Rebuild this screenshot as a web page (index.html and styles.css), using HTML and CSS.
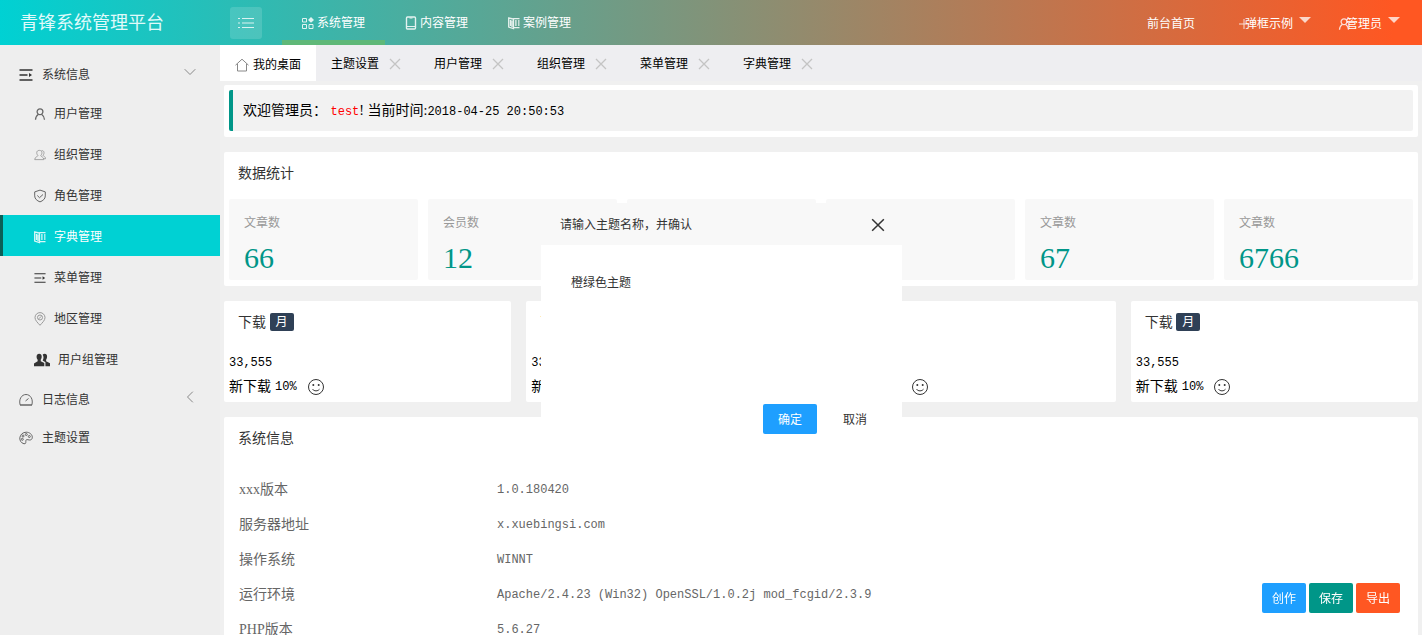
FILE: index.html
```html
<!DOCTYPE html>
<html lang="zh-CN">
<head>
<meta charset="utf-8">
<title>青锋系统管理平台</title>
<link rel="stylesheet" href="styles.css">
</head>
<body>
<svg class="sprite" aria-hidden="true">
  <symbol id="i-list" viewBox="0 0 16 12"><path d="M4 1.500h12M4 6h12M4 10.500h12M0 1.500h2M0 6h2M0 10.500h2"/></symbol>
  <symbol id="i-grid" viewBox="0 0 12 12"><path d="M.5 1.500h4v3.500h-4zM.5 7.500h4v4h-4zM7 7.500h4v4H7z"/><path class="solid" d="M9 0l3 2.900-3 2.900-3-2.900z"/></symbol>
  <symbol id="i-phone" viewBox="0 0 12 14"><rect x="1.500" y="1" width="9" height="12" rx="1" stroke-width="1.400"/><path d="M1.500 10.500h9M4.500 2h3"/></symbol>
  <symbol id="i-book" viewBox="0 0 12 12"><path stroke-width="1.300" d="M.7 1l4.800 1v9.500L.7 10zM5.500 1.700h6M5.500 10.700h6M2.500 3v6M4 3.500v6.500M7 4h1.700M7 6h1.700M7 8h1.700M10 4h1.500M10 6h1.500M10 8h1.500"/></symbol>
  <symbol id="i-user" viewBox="0 0 12 12"><g stroke-width="1.300"><circle cx="6" cy="3.800" r="2.900"/><path d="M1.500 11.800c.2-2.600 1-4.200 3-5.500M7.500 6.300c2 1.300 2.800 2.900 3 5.500"/></g></symbol>
  <symbol id="i-group" viewBox="0 0 13.500 12"><path d="M6 .8c4 0 3.200 4.500 1.600 5.700 0 1.500 3.400 1.500 3.400 4.700H.8c0-3.200 3.600-3.200 3.600-4.700C2.800 5.300 2 .8 6 .8zM8.500 1c3.600-.2 3.200 4 1.600 5.300.3 1 3 1.500 3 3.900H11"/></symbol>
  <symbol id="i-shield" viewBox="0 0 12 13"><path d="M6 .6l5.300 1.800v4c0 3-2.300 4.800-5.300 6-3-1.200-5.300-3-5.300-6v-4zM3.300 6l2.200 2.200L9 5"/></symbol>
  <symbol id="i-menu" viewBox="0 0 14 12"><path stroke-width="1.300" d="M.5 1h13M.5 6h8M.5 11h13"/><path class="solid" d="M10 4l3 2-3 2z"/></symbol>
  <symbol id="i-pin" viewBox="0 0 12 14"><path d="M6 13.300C3.500 10.500 1 8.300 1 5.600a5 5 0 0 1 10 0c0 2.700-2.500 4.900-5 7.700z"/><circle cx="6" cy="5.500" r="2.500"/><path d="M4.800 6.800l2.400-2.400"/></symbol>
  <symbol id="i-people" viewBox="0 0 14 11"><path class="solid" d="M4.500 0c3 0 2.500 4 1.400 5.300v1.200L9 8.200V11H0V8.600l3.200-2V5.300C2 4 1.600 0 4.500 0zM9.400 0c2.800 0 2.300 4 1.200 5.300v1.200L14 8.400V11h-4V7.500L7.600 6C8.600 4 8.500 2 7.600.8 8 .3 8.600 0 9.400 0z"/></symbol>
  <symbol id="i-gauge" viewBox="0 0 14 13"><path d="M1.200 11.500C-.5 6 2.500 1 7 1s7.500 5 5.800 10.500M6.500 7.500L9.500 5"/><path stroke-width="1.500" d="M1 11.500h12"/></symbol>
  <symbol id="i-palette" viewBox="0 0 14 13"><path d="M5 12.300C2 11.500.6 9 .8 6.300 1.200 3 4 .7 7.200.7c3.400 0 6.100 2.300 6.100 5 0 2.200-1.500 3-3 2.800-2-.3-2.800-.8-3.300.2-.5 1.200.6 3.900-2 3.600z"/><circle cx="4" cy="4.500" r="1"/><circle cx="7.300" cy="3" r="1"/><circle cx="10.300" cy="5" r="1"/><circle cx="3.300" cy="7.800" r="1"/></symbol>
  <symbol id="i-home" viewBox="0 0 14 13"><path d="M.5 6.700L7 .7l6.500 6M2.500 5.500v7h9v-7"/></symbol>
  <symbol id="i-close" viewBox="0 0 12 12"><path stroke-width="1.300" d="M1 1l10 10M11 1L1 11"/></symbol>
  <symbol id="i-down" viewBox="0 0 12 7"><path d="M.7.700L6 6 11.300.700"/></symbol>
  <symbol id="i-left" viewBox="0 0 7 14"><path d="M6.300 1.700L1 7l5.300 5.300"/></symbol>
  <symbol id="i-caret" viewBox="0 0 12 6"><path class="solid" d="M0 0h12L6 6z"/></symbol>
  <symbol id="i-plus" viewBox="0 0 10 10"><path d="M0 5h10M5 0v10"/></symbol>
  <symbol id="i-smile" viewBox="0 0 18 18"><circle cx="9" cy="9" r="7.500"/><path d="M5.500 11.200c1.800 2.200 5.200 2.200 7 0"/><circle class="solid" cx="6.300" cy="7" r="1"/><circle class="solid" cx="11.700" cy="7" r="1"/></symbol>
</svg>

<header class="topbar">
  <h1 class="logo">青锋系统管理平台</h1>
  <button class="toggle" type="button" aria-label="菜单"><svg class="ic ic-16"><use href="#i-list"/></svg></button>
  <nav class="topnav">
    <a class="topnav-item is-active" href="#"><svg class="ic ic-12"><use href="#i-grid"/></svg>系统管理</a>
    <a class="topnav-item" href="#"><svg class="ic ic-12"><use href="#i-phone"/></svg>内容管理</a>
    <a class="topnav-item" href="#"><svg class="ic ic-12"><use href="#i-book"/></svg>案例管理</a>
  </nav>
  <nav class="usernav">
    <a href="#">前台首页</a>
    <a href="#"><svg class="ic ic-10"><use href="#i-plus"/></svg><span class="snug">弹框示例</span><svg class="caret"><use href="#i-caret"/></svg></a>
    <a href="#"><svg class="ic ic-12"><use href="#i-user"/></svg><span class="snug">管理员</span><svg class="caret"><use href="#i-caret"/></svg></a>
  </nav>
</header>

<div class="shell">
  <aside class="side">
    <a class="side-item" href="#"><svg class="ic ic-14 dark"><use href="#i-menu"/></svg>系统信息<svg class="ic ic-12 arrow"><use href="#i-down"/></svg></a>
    <a class="side-sub" href="#"><svg class="ic ic-12"><use href="#i-user"/></svg>用户管理</a>
    <a class="side-sub" href="#"><svg class="ic ic-12 pale"><use href="#i-group"/></svg>组织管理</a>
    <a class="side-sub" href="#"><svg class="ic ic-12"><use href="#i-shield"/></svg>角色管理</a>
    <a class="side-sub is-active" href="#"><svg class="ic ic-12"><use href="#i-book"/></svg>字典管理</a>
    <a class="side-sub" href="#"><svg class="ic ic-12 dark"><use href="#i-menu"/></svg>菜单管理</a>
    <a class="side-sub" href="#"><svg class="ic ic-12 pale"><use href="#i-pin"/></svg>地区管理</a>
    <a class="side-sub" href="#"><svg class="ic ic-16 dark"><use href="#i-people"/></svg>用户组管理</a>
    <a class="side-item" href="#"><svg class="ic ic-14"><use href="#i-gauge"/></svg>日志信息<svg class="ic ic-12 arrow"><use href="#i-left"/></svg></a>
    <a class="side-item" href="#"><svg class="ic ic-14"><use href="#i-palette"/></svg>主题设置</a>
  </aside>

  <div class="content">
    <div class="tabs">
      <a class="tab is-active" href="#"><svg class="ic ic-14"><use href="#i-home"/></svg>我的桌面</a>
      <div class="tab">主题设置<button type="button" aria-label="关闭"><svg class="ic ic-12"><use href="#i-close"/></svg></button></div>
      <div class="tab">用户管理<button type="button" aria-label="关闭"><svg class="ic ic-12"><use href="#i-close"/></svg></button></div>
      <div class="tab">组织管理<button type="button" aria-label="关闭"><svg class="ic ic-12"><use href="#i-close"/></svg></button></div>
      <div class="tab">菜单管理<button type="button" aria-label="关闭"><svg class="ic ic-12"><use href="#i-close"/></svg></button></div>
      <div class="tab">字典管理<button type="button" aria-label="关闭"><svg class="ic ic-12"><use href="#i-close"/></svg></button></div>
    </div>

    <main class="page">
      <section class="card"><div class="card-body"><blockquote class="quote">欢迎管理员： <span class="mono name">test</span>! 当前时间:<span class="mono">2018-04-25 20:50:53</span></blockquote></div></section>

      <section class="card">
        <h2 class="card-head">数据统计</h2>
        <div class="card-body stats">
          <a class="stat" href="#"><h3>文章数</h3><p>66</p></a>
          <a class="stat" href="#"><h3>会员数</h3><p>12</p></a>
          <div class="stat"></div>
          <div class="stat"></div>
          <a class="stat" href="#"><h3>文章数</h3><p>67</p></a>
          <a class="stat" href="#"><h3>文章数</h3><p>6766</p></a>
        </div>
      </section>

      <div class="downloads">
        <section class="card"><h2 class="card-head">下载 <span class="badge">月</span></h2><div class="card-body lines"><p class="mono">33,555</p><p>新下载 <span class="mono">10%</span><svg class="ic smile"><use href="#i-smile"/></svg></p></div></section>
        <section class="card"><h2 class="card-head">下载 <span class="badge">月</span></h2><div class="card-body lines"><p class="mono">33,555</p><p>新下载 <span class="mono">10%</span><svg class="ic smile"><use href="#i-smile"/></svg></p></div></section>
        <section class="card"><h2 class="card-head">下载 <span class="badge">月</span></h2><div class="card-body lines"><p class="mono">33,555</p><p>新下载 <span class="mono">10%</span><svg class="ic smile"><use href="#i-smile"/></svg></p></div></section>
        <section class="card"><h2 class="card-head">下载 <span class="badge">月</span></h2><div class="card-body lines"><p class="mono">33,555</p><p>新下载 <span class="mono">10%</span><svg class="ic smile"><use href="#i-smile"/></svg></p></div></section>
      </div>

      <section class="card">
        <h2 class="card-head">系统信息</h2>
        <table class="info">
          <tr><th scope="row">xxx版本</th><td class="mono">1.0.180420</td></tr>
          <tr><th scope="row">服务器地址</th><td class="mono">x.xuebingsi.com</td></tr>
          <tr><th scope="row">操作系统</th><td class="mono">WINNT</td></tr>
          <tr><th scope="row">运行环境</th><td class="mono">Apache/2.4.23 (Win32) OpenSSL/1.0.2j mod_fcgid/2.3.9</td></tr>
          <tr><th scope="row">PHP版本</th><td class="mono">5.6.27</td></tr>
        </table>
      </section>
    </main>
  </div>
</div>

<div class="actions">
  <button class="btn blue" type="button">创作</button>
  <button class="btn green" type="button">保存</button>
  <button class="btn orange" type="button">导出</button>
</div>

<div class="dialog" role="dialog" aria-labelledby="dialog-title">
  <div class="dialog-head"><h2 id="dialog-title">请输入主题名称，并确认</h2><button type="button" aria-label="关闭"><svg class="ic ic-14"><use href="#i-close"/></svg></button></div>
  <div class="dialog-body">橙绿色主题</div>
  <div class="dialog-foot"><button class="btn blue wide" type="button">确定</button><button class="btn plain wide" type="button">取消</button></div>
</div>
</body>
</html>
```
FILE: styles.css
```css
* { box-sizing: border-box; margin: 0; padding: 0; }

body {
  display: flex;
  flex-direction: column;
  height: 100vh;
  overflow: hidden;
  background: #f0f0f0;
  color: #000;
  font: 12px/20px "Liberation Serif", "Noto Sans CJK SC", sans-serif;
}

a { color: inherit; text-decoration: none; }
button { border: 0; background: none; color: inherit; font: inherit; cursor: pointer; }
h1, h2, h3, th { font-weight: 400; }

.sprite { position: absolute; width: 0; height: 0; }
svg { stroke: currentColor; fill: none; }
.solid { fill: currentColor; stroke: none; }
.ic { flex: none; display: block; height: 14px; }
.ic-10 { width: 10px; }
.ic-12 { width: 12px; }
.ic-14 { width: 14px; }
.ic-16 { width: 16px; }
.mono { font-family: "Liberation Mono", monospace; font-size: 12px; }

.topbar {
  flex: none;
  display: flex;
  align-items: center;
  height: 45px;
  background: linear-gradient(to right, #00d1d3, #ff5722 98%);
  color: #fff;
}
.logo { width: 230px; padding-left: 20px; font-size: 18px; line-height: 44px; color: #e0fafa; }
.toggle {
  display: grid;
  place-items: center;
  width: 32px;
  height: 32px;
  border-radius: 3px;
  background: rgba(255, 255, 255, .14);
}
.toggle .ic { opacity: .8; }
.topnav { display: flex; height: 100%; margin-left: 20px; }
.topnav-item { display: flex; align-items: center; gap: 3px; padding: 6px 20px 0; border-bottom: 5px solid transparent; }
.topnav-item.is-active { border-color: #5fb878; }
.topnav-item .ic { opacity: .85; }
.usernav { display: flex; gap: 44px; margin-left: auto; padding-right: 22px; }
.usernav a { display: flex; align-items: center; padding-top: 2px; }
.usernav a:last-child { margin-left: -17px; }
.usernav .ic { opacity: .8; }
.snug { margin-left: -4px; }
.caret { width: 12px; height: 6px; margin: 0 0 8px 6px; opacity: .75; }

.shell { flex: 1; display: flex; min-height: 0; }
.side { flex: none; width: 220px; padding-top: 9px; background: #eee; color: #333; }
.side .ic { color: #666; }
.side .pale { color: #999; }
.side .dark { color: #333; }
.side-item { display: flex; align-items: center; gap: 9px; height: 38px; padding: 3px 24px 0 19px; }
.side .arrow { margin-left: auto; margin-bottom: 6px; color: #888; }
.side-sub { display: flex; align-items: center; gap: 8px; height: 41px; padding: 3px 0 0 31px; border-left: 3px solid transparent; }
.side-sub.is-active { border-color: #0b5f57; background: #00d1d3; color: #fff; }
.side-sub.is-active .ic { color: #fff; opacity: .85; }

.content { flex: 1; min-width: 0; display: flex; flex-direction: column; }
.tabs { flex: none; display: flex; height: 36px; background: #eeeef1; }
.tab { display: flex; align-items: center; gap: 10px; padding: 2px 18px 0 15px; }
.tab.is-active { gap: 4px; padding: 3px 15px 0; background: #fff; }
.tab .ic { color: #888; }
.tab button .ic { height: 12px; color: #c4c4c4; }

.page { flex: 1; display: flex; flex-direction: column; gap: 15px; padding: 4px; min-height: 0; overflow: hidden; }
.card { flex: none; border-radius: 2px; background: #fff; }
.card-head { height: 42px; padding: 0 14px; font-size: 14px; line-height: 44px; color: #333; }
.card-body { padding: 5px 5px 6px; }
.quote {
  padding: 10px;
  border-left: 4px solid #009688;
  border-radius: 2px;
  background: #f2f2f2;
  font-size: 14px;
  line-height: 21px;
}
.quote .mono { line-height: 16px; }
.name { color: #f00; }

.stats { display: grid; grid-template-columns: repeat(6, 1fr); gap: 10px; }
.stat { padding: 14px 15px 4px; border-radius: 2px; background: #f8f8f8; }
.stat h3 { font-size: 12px; line-height: 20px; color: #999; }
.stat p { padding-top: 6px; font-size: 30px; line-height: 37px; color: #009688; }

.downloads { flex: none; display: grid; grid-template-columns: repeat(4, 1fr); gap: 15px; }
.badge { display: inline-block; padding: 0 6px; border-radius: 2px; background: #2f4056; color: #fff; font-size: 12px; line-height: 18px; vertical-align: 1px; }
.lines { padding: 8px 5px 3px; font-size: 14px; line-height: 24px; }
.lines p { display: flex; align-items: center; gap: 4px; }
.smile { width: 18px; height: 18px; margin-left: 6px; color: #333; }

.info { width: calc(100% - 30px); margin: 13px 15px; border-collapse: collapse; color: #666; }
.info th { width: 258px; height: 35px; text-align: left; font-size: 14px; }

.btn { height: 30px; padding: 1px 10px 0; border-radius: 2px; color: #fff; }
.blue { background: #1e9fff; }
.green { background: #009688; }
.orange { background: #ff5722; }
.plain { color: #333; }
.wide { padding: 1px 15px 0; }

.actions { position: fixed; right: 22px; bottom: 22px; display: flex; gap: 3px; }

.dialog { position: fixed; top: 203px; left: calc(50% - 170px); width: 361px; background: #fff; color: #333; }
.dialog-head { display: flex; align-items: center; justify-content: space-between; height: 42px; padding: 2px 17px 0 19px; background: #f8f8f8; }
.dialog-head h2 { font-size: 12px; }
.dialog-body { height: 159px; padding: 28px 30px; }
.dialog-foot { display: flex; justify-content: flex-end; gap: 11px; padding: 0 20px 15px; }
```
